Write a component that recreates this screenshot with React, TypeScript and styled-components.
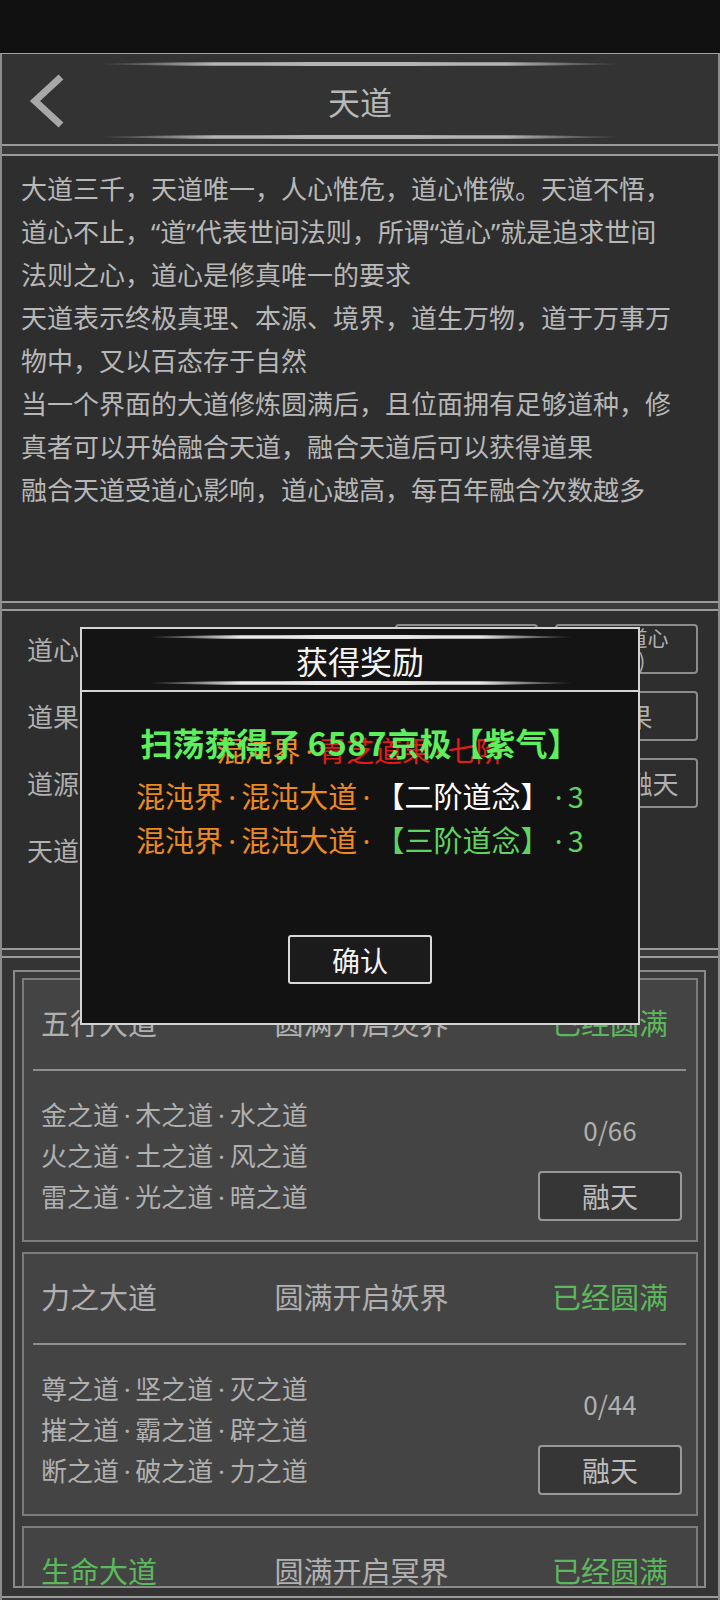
import React from "react";
import styled, { createGlobalStyle } from "styled-components";

const GlobalStyle = createGlobalStyle`
  html, body {
    margin: 0;
    padding: 0;
    background: #111;
  }
  body {
    font-family: "Noto Sans CJK SC", "Noto Sans", sans-serif;
    text-spacing-trim: space-all;
  }
  * {
    box-sizing: border-box;
  }
`;

const Screen = styled.div`
  position: relative;
  width: 720px;
  height: 1600px;
  overflow: hidden;
  background: #111;
`;

const StatusBar = styled.div`
  height: 53px;
  background: #111;
`;

const Page = styled.div`
  height: 1547px;
  display: flex;
  flex-direction: column;
  background: #3a3a3a;
  border-top: 1px solid #a0a0a0;
  border-left: 2px solid #8c8c8c;
  border-right: 2px solid #8c8c8c;
`;

const Header = styled.header`
  height: 92px;
  flex-shrink: 0;
  display: flex;
  flex-direction: column;
  padding-top: 8px;
  background: #333;
  border-bottom: 2px solid #9a9a9a;
`;

const Flourish = styled.div<{ $w: number; $c: string }>`
  width: ${(p) => p.$w}px;
  height: 4px;
  margin: 0 auto;
  border-radius: 50%;
  background: linear-gradient(
    90deg,
    transparent 0%,
    ${(p) => p.$c} 22%,
    ${(p) => p.$c} 78%,
    transparent 100%
  );
`;

const TitleRow = styled.div<{ $h: number }>`
  height: ${(p) => p.$h}px;
  display: grid;
  grid-template-columns: 1fr auto 1fr;
  align-items: center;
`;

const BackIcon = styled.svg`
  margin-left: 27px;
`;

const Title = styled.h1<{ $size: number; $color: string }>`
  margin: 0;
  font-size: ${(p) => p.$size}px;
  font-weight: 400;
  line-height: 1;
  color: ${(p) => p.$color};
`;

// narrow middle dot between names, like the game's font
const Dot = styled.span`
  font-family: "Noto Sans", sans-serif;
  margin: 0 0.18em;
`;

const withDots = (s: string) =>
  s.split("·").flatMap((part, i) =>
    i === 0 ? [part] : [<Dot key={i}>·</Dot>, part]
  );

const Panel = styled.section<{ $h: number; $mt: number; $bg?: string }>`
  height: ${(p) => p.$h}px;
  margin-top: ${(p) => p.$mt}px;
  flex-shrink: 0;
  background: ${(p) => p.$bg ?? "#2e2e2e"};
  border-top: 2px solid #9a9a9a;
  border-bottom: 2px solid #9a9a9a;
`;

const Description = styled(Panel)`
  padding: 12px 37px 0 19px;
  font-family: "Noto Sans", "Noto Sans CJK SC", sans-serif;
  color: #b8b8b8;
  font-size: 26px;
  line-height: 43px;

  p {
    margin: 0;
  }
`;

const Stats = styled(Panel)`
  padding-top: 4px;
`;

const StatRow = styled.div`
  height: 67px;
  display: flex;
  align-items: center;
  gap: 17px;
  padding: 0 20px 0 25px;
`;

const StatLabel = styled.span`
  margin-right: auto;
  font-size: 26px;
  color: #b0b0b0;
  white-space: nowrap;
`;

const GhostButton = styled.button<{ $small?: boolean }>`
  width: 143px;
  height: 50px;
  padding: 0;
  border: 2px solid #8c8c8c;
  border-radius: 4px;
  background: transparent;
  color: #b0b0b0;
  font-family: inherit;
  font-size: ${(p) => (p.$small ? 21 : 26)}px;
  line-height: 1.05;
`;

const ListPanel = styled(Panel)`
  padding: 12px 12px 0 11px;
  background: #343434;
`;

const ListFrame = styled.div`
  height: 618px;
  display: flex;
  flex-direction: column;
  gap: 10px;
  padding: 6px 6px 0 7px;
  overflow: hidden;
  background: #3b3b3b;
  border: 2px solid #8a8a8a;
`;

const Card = styled.div`
  height: 264px;
  flex-shrink: 0;
  background: #444;
  border: 2px solid #7c7c7c;
`;

const CardHead = styled.div`
  height: 89px;
  display: grid;
  grid-template-columns: 1fr auto 1fr;
  align-items: center;
  padding: 0 14px 6px 17px;
  font-size: 29px;
  color: #b0b0b0;
`;

const HeadText = styled.span<{ $green?: boolean }>`
  color: ${(p) => (p.$green ? "#5cb85c" : "#b0b0b0")};
  white-space: nowrap;
`;

const StatusText = styled(HeadText)`
  justify-self: end;
  width: 144px;
  text-align: center;
`;

const Divider = styled.div`
  height: 2px;
  margin: 0 10px 0 9px;
  background: #8e8e8e;
`;

const CardBody = styled.div`
  height: 169px;
  display: flex;
  align-items: center;
  justify-content: space-between;
  padding: 0 14px 0 17px;
`;

const DaoList = styled.div`
  font-size: 26px;
  line-height: 39px;
  color: #b0b0b0;
  white-space: nowrap;
`;

const Side = styled.div`
  width: 144px;
  margin-top: 20px;
  display: flex;
  flex-direction: column;
  align-items: center;
`;

const Counter = styled.span`
  font-size: 26px;
  line-height: 40px;
  color: #b0b0b0;
`;

const FuseButton = styled.button`
  width: 144px;
  height: 50px;
  margin-top: 21px;
  padding: 0;
  border: 2px solid #999;
  border-radius: 4px;
  background: #363636;
  color: #bdbdbd;
  font-family: inherit;
  font-size: 28px;
`;

const Modal = styled.div`
  position: absolute;
  left: 80px;
  top: 627px;
  width: 560px;
  height: 398px;
  display: flex;
  flex-direction: column;
  background: #121212;
  border: 2px solid #d4d4d4;
`;

const ModalHead = styled.div`
  height: 63px;
  flex-shrink: 0;
  padding-top: 6px;
  background: #141414;
  border-bottom: 2px solid #d4d4d4;
`;

const ModalBody = styled.div`
  flex: 1;
  display: flex;
  flex-direction: column;
  align-items: center;
  padding-top: 28px;
`;

const Headline = styled.div`
  position: relative;
  height: 44px;
  margin-bottom: 10px;
  text-align: center;
  white-space: nowrap;
`;

const GhostLine = styled.div`
  position: absolute;
  left: 50%;
  top: 8px;
  transform: translateX(-50%);
  font-size: 28px;
  line-height: 44px;
  color: #e31b1b;
`;

const HeadlineText = styled.span`
  position: relative;
  font-size: 32px;
  font-weight: 700;
  line-height: 44px;
  color: #5cf05c;
`;

const Digits = styled.span`
  letter-spacing: 1px;
`;

const RewardLine = styled.div`
  font-size: 29px;
  line-height: 43px;
  white-space: nowrap;
`;

const Tint = styled.span<{ $c: string }>`
  color: ${(p) => p.$c};
`;

const ConfirmButton = styled.button`
  width: 144px;
  height: 49px;
  margin-top: auto;
  margin-bottom: 39px;
  padding: 0;
  border: 2px solid #d8d8d8;
  border-radius: 3px;
  background: #1b1b1b;
  color: #f2f2f2;
  font-family: inherit;
  font-size: 28px;
`;

const ORANGE = "#ec8a22";
const GREEN = "#5fd35f";

const cards = [
  {
    name: "五行大道",
    unlock: "圆满开启灵界",
    daos: ["金之道·木之道·水之道", "火之道·土之道·风之道", "雷之道·光之道·暗之道"],
    count: "0/66",
  },
  {
    name: "力之大道",
    unlock: "圆满开启妖界",
    daos: ["尊之道·坚之道·灭之道", "摧之道·霸之道·辟之道", "断之道·破之道·力之道"],
    count: "0/44",
  },
  {
    name: "生命大道",
    unlock: "圆满开启冥界",
    green: true,
    daos: ["生之道·命之道·愈之道", "血之道·魂之道·灵之道", "寿之道·轮之道·死之道"],
    count: "0/44",
  },
];

export default function App() {
  return (
    <Screen>
      <GlobalStyle />
      <StatusBar />
      <Page>
        <Header>
          <Flourish $w={520} $c="#b4b4b4" />
          <TitleRow $h={69}>
            <BackIcon width="36" height="56" viewBox="0 0 36 56">
              <polyline
                points="32,4 6,28 32,52"
                fill="none"
                stroke="#a8a8a8"
                strokeWidth="7"
              />
            </BackIcon>
            <Title $size={32} $color="#b8b8b8">
              天道
            </Title>
            <span />
          </TitleRow>
          <Flourish $w={520} $c="#b4b4b4" />
        </Header>

        <Description $h={449} $mt={8}>
          <p>大道三千，天道唯一，人心惟危，道心惟微。天道不悟，道心不止，“道”代表世间法则，所谓“道心”就是追求世间法则之心，道心是修真唯一的要求</p>
          <p>天道表示终极真理、本源、境界，道生万物，道于万事万物中，又以百态存于自然</p>
          <p>当一个界面的大道修炼圆满后，且位面拥有足够道种，修真者可以开始融合天道，融合天道后可以获得道果</p>
          <p>融合天道受道心影响，道心越高，每百年融合次数越多</p>
        </Description>

        <Stats $h={341} $mt={6}>
          <StatRow>
            <StatLabel>道心：3268</StatLabel>
            <GhostButton>提升道心</GhostButton>
            <GhostButton $small>
              一键道心
              <br />
              (10)
            </GhostButton>
          </StatRow>
          <StatRow>
            <StatLabel>道果：0</StatLabel>
            <GhostButton>道果</GhostButton>
          </StatRow>
          <StatRow>
            <StatLabel>道源：12</StatLabel>
            <GhostButton>一键融天</GhostButton>
          </StatRow>
          <StatRow>
            <StatLabel>天道：混沌天道</StatLabel>
          </StatRow>
        </Stats>

        <ListPanel $h={642} $mt={6}>
          <ListFrame>
            {cards.map((c) => (
              <Card key={c.name}>
                <CardHead>
                  <HeadText $green={c.green}>{c.name}</HeadText>
                  <HeadText>{c.unlock}</HeadText>
                  <StatusText $green>已经圆满</StatusText>
                </CardHead>
                <Divider />
                <CardBody>
                  <DaoList>
                    {c.daos.map((d) => (
                      <div key={d}>{withDots(d)}</div>
                    ))}
                  </DaoList>
                  <Side>
                    <Counter>{c.count}</Counter>
                    <FuseButton>融天</FuseButton>
                  </Side>
                </CardBody>
              </Card>
            ))}
          </ListFrame>
        </ListPanel>
      </Page>

      <Modal>
        <ModalHead>
          <Flourish $w={425} $c="#e8e8e8" />
          <TitleRow $h={42}>
            <span />
            <Title $size={32} $color="#f4f4f4">
              获得奖励
            </Title>
            <span />
          </TitleRow>
          <Flourish $w={425} $c="#e8e8e8" />
        </ModalHead>
        <ModalBody>
          <Headline>
            <GhostLine>
              <Tint $c={ORANGE}>混沌界{withDots("·")}</Tint>青芝道果{withDots("·")}七阶
            </GhostLine>
            <HeadlineText>
              扫荡获得了 <Digits>6587</Digits>京极【紫气】
            </HeadlineText>
          </Headline>
          <RewardLine>
            <Tint $c={ORANGE}>{withDots("混沌界·混沌大道·")}</Tint>
            <Tint $c="#ffffff">【二阶道念】</Tint>
            <Tint $c={GREEN}>{withDots("·3")}</Tint>
          </RewardLine>
          <RewardLine>
            <Tint $c={ORANGE}>{withDots("混沌界·混沌大道·")}</Tint>
            <Tint $c={GREEN}>【三阶道念】</Tint>
            <Tint $c={GREEN}>{withDots("·3")}</Tint>
          </RewardLine>
          <ConfirmButton>确认</ConfirmButton>
        </ModalBody>
      </Modal>
    </Screen>
  );
}
